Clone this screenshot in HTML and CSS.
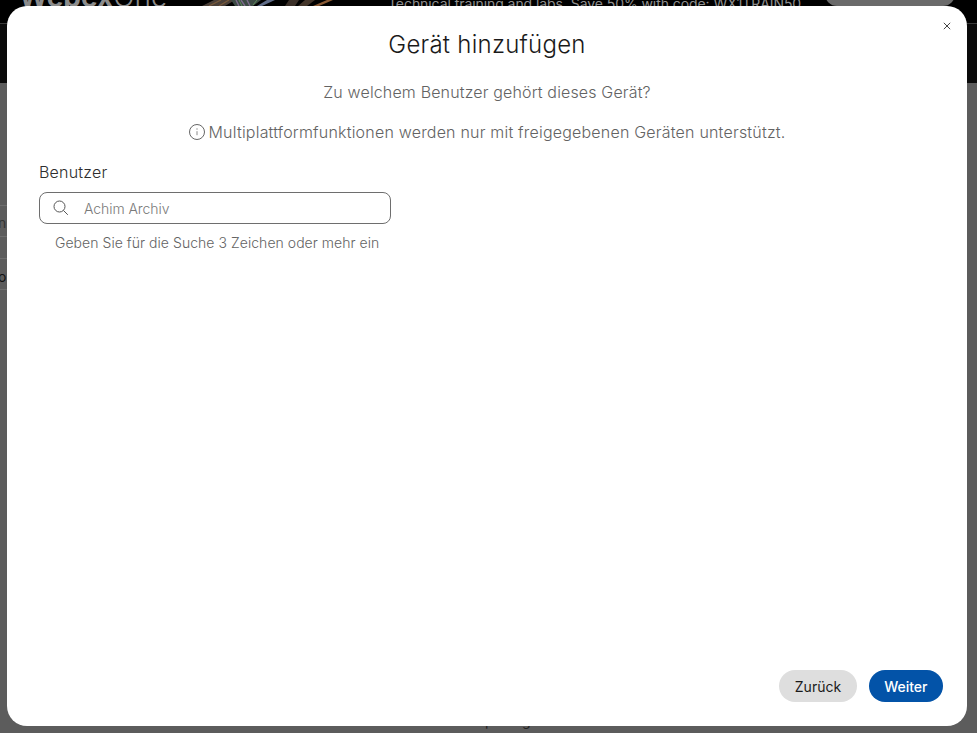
FILE: index.html
```html
<!DOCTYPE html>
<html lang="de">
<head>
<meta charset="utf-8">
<title>Gerät hinzufügen</title>
<link rel="stylesheet" href="styles.css">
</head>
<body>
<div class="page">
  <header class="topbar">
    <div class="logo"><b>Webex</b><span>One</span></div>
    <svg class="art" viewBox="0 0 140 6" aria-hidden="true">
      <path d="M7 6 L19 0 H40 L30 6 Z" fill="#4a3f38"/>
      <path d="M14 6 L26 0 M24 6 L34 0" stroke="#7a5a3a" stroke-width="1.2" fill="none"/>
      <path d="M40 6 L36 0 H66 L58 6 Z" fill="#3c4a44"/>
      <path d="M44 6 L41 0 M50 6 L46 0 M55 6 L52 0" stroke="#7c6a8c" stroke-width="1.4" fill="none"/>
      <path d="M47 6 L44 0 M58 5 L62 0" stroke="#5f8a5a" stroke-width="1" fill="none"/>
      <path d="M67 6 L80 0 H72 L62 6 Z" fill="#5f6c88"/>
      <path d="M90 6 L94 0 H104 L100 6 Z" fill="#3a2f28"/>
      <path d="M103 6 L110 0 H120 L112 6 Z" fill="#43352a"/>
      <path d="M118 6 L132 0 H138 L124 6 Z" fill="#8a5a34"/>
    </svg>
    <div class="promo">Technical training and labs. Save 50% with code: WX1TRAIN50</div>
    <div class="promo-btn"></div>
  </header>
  <div class="backdrop-rows">
    <div class="row row-a"><span class="frag frag-muted">n</span></div>
    <div class="row row-b"></div>
    <div class="row row-c"><span class="frag">o</span></div>
  </div>
  <div class="bottom-frag">pairing</div>
</div>

<div class="dialog" role="dialog">
  <button class="close" aria-label="Schließen">
    <svg viewBox="0 0 8 8" width="8" height="8"><path d="M.8.8l6.4 6.4M7.2.8L.8 7.2" stroke="#444" stroke-width="1" fill="none"/></svg>
  </button>
  <h1 class="title">Gerät hinzufügen</h1>
  <p class="question">Zu welchem Benutzer gehört dieses Gerät?</p>
  <p class="notice">
    <svg class="info" viewBox="0 0 16 16" width="16" height="16"><circle cx="8" cy="8" r="7.5" fill="none" stroke="#666" stroke-width="1"/><path d="M8 7.2v4" stroke="#8a8a8a" stroke-width="1"/><circle cx="8" cy="5" r=".7" fill="#8a8a8a"/></svg>
    <span>Multiplattformfunktionen werden nur mit freigegebenen Geräten unterstützt.</span>
  </p>
  <label class="label" for="user">Benutzer</label>
  <div class="search">
    <svg class="search-icon" viewBox="0 0 16 16" width="16" height="16"><circle cx="6.5" cy="6.5" r="5.5" fill="none" stroke="#555" stroke-width="1"/><path d="M10.4 10.4l4.4 4.4" stroke="#555" stroke-width="1" fill="none"/></svg>
    <input id="user" class="search-input" type="text" placeholder="Achim Archiv">
  </div>
  <p class="help">Geben Sie für die Suche 3 Zeichen oder mehr ein</p>
  <div class="actions">
    <button class="btn btn-back">Zurück</button>
    <button class="btn btn-next">Weiter</button>
  </div>
</div>
</body>
</html>
```
FILE: styles.css
```css
* { box-sizing: border-box; }
html, body { margin: 0; height: 100%; overflow: hidden; }
body { font-family: Inter, "Liberation Sans", sans-serif; background: #5c5c5c; }

.page { height: 733px; position: relative; }
.topbar { height: 83px; background: #0a0a0a; display: flex; position: relative; }
.topbar::before { content: ""; position: absolute; left: 0; right: 0; top: 0; height: 23px; background: #000; border-bottom: 1px solid #3a3a3a; }
.logo { position: absolute; left: 19px; top: -16px; color: #8c8c8c; font-size: 28px; line-height: 26px; }
.logo span { font-weight: 300; }
.art { position: absolute; left: 195px; top: 0; width: 140px; height: 6px; }
.promo { position: absolute; left: 388px; top: -5px; color: #8f8f8f; font-size: 14px; letter-spacing: -0.07px; line-height: 17px; white-space: nowrap; }
.promo-btn { position: absolute; left: 825px; top: -18px; width: 130px; height: 24px; border-radius: 14px; background: #6a6a6a; }
.backdrop-rows { position: absolute; left: 0; top: 205px; width: 8px; }
.row { border-top: 1px solid #6e6e6e; overflow: hidden; font-size: 14px; color: #111; }
.row-a { height: 31px; line-height: 34px; }
.row-b { height: 22px; }
.row-c { height: 32px; border-bottom: 1px solid #6e6e6e; line-height: 36px; }
.frag { display: block; margin-left: -2px; }
.frag-muted { color: #333; }
.bottom-frag { position: absolute; left: 485px; top: 712px; font-size: 14px; line-height: 17px; color: #222; }

.dialog { position: absolute; left: 7px; top: 6px; width: 960px; height: 720px; background: #fff; border-radius: 20px; padding: 0 24px 0 32px; display: flex; flex-direction: column; }
.close { position: absolute; top: 16px; right: 16px; width: 8px; height: 8px; padding: 0; border: 0; background: none; display: flex; }
.title { margin: 24px 8px 0 0; font-size: 24px; line-height: 30px; font-weight: 350; letter-spacing: 0.25px; color: #1a1a1a; text-align: center; }
.question { margin: 20px 8px 0 0; font-size: 16px; line-height: 24px; font-weight: 350; letter-spacing: 0.15px; color: #636363; text-align: center; }
.notice { margin: 16px 8px 0 0; font-size: 16px; line-height: 24px; font-weight: 350; letter-spacing: 0.2px; color: #636363; display: flex; justify-content: center; align-items: center; gap: 4px; }
.label { margin-top: 16px; font-size: 16px; line-height: 24px; font-weight: 350; letter-spacing: 0.2px; color: #2e2e2e; }
.search { margin-top: 8px; width: 352px; height: 32px; border: 1px solid #6e6e6e; border-radius: 8px; display: flex; align-items: center; padding-left: 13px; gap: 15px; }
.search-icon { flex: none; }
.search-input { flex: 1; min-width: 0; border: 0; outline: 0; padding: 0; background: none; font: inherit; font-size: 14px; letter-spacing: -0.07px; font-weight: 350; color: #333; }
.search-input::placeholder { color: #7a7a7a; opacity: 1; }
.help { margin: 9px 0 0 16px; font-size: 14px; line-height: 20px; font-weight: 350; letter-spacing: 0.045px; color: #636363; }
.actions { margin-top: auto; margin-bottom: 24px; display: flex; justify-content: flex-end; gap: 12px; }
.btn { height: 32px; border: 0; border-radius: 16px; padding: 0 15.5px; font: inherit; font-size: 14px; font-weight: 500; }
.btn-back { background: #dedede; color: #1a1a1a; font-weight: 400; }
.btn-next { background: #0353a8; color: #fff; }
```
